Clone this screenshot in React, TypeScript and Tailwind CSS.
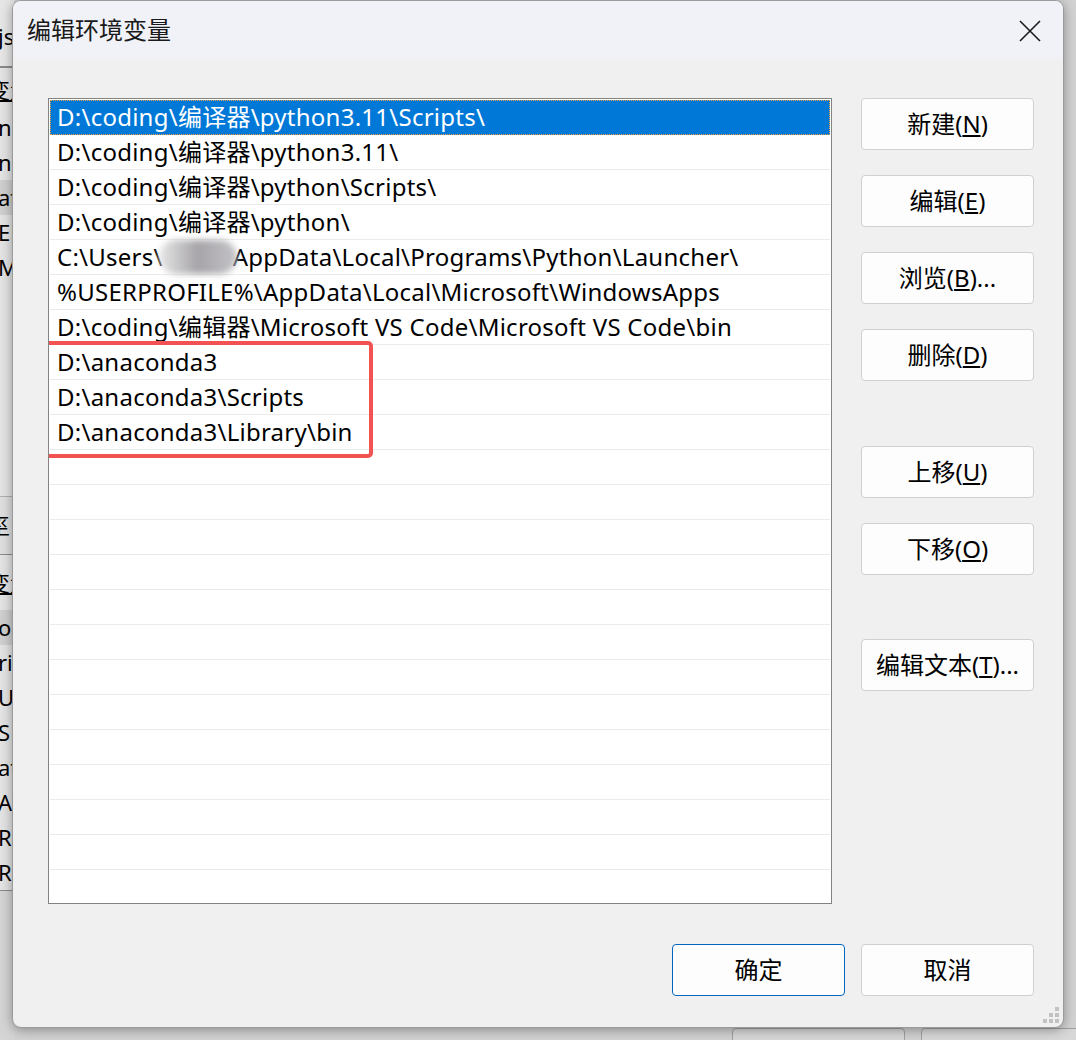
import React from "react";

const font = { fontFamily: '"Noto Sans", "Noto Sans CJK SC", sans-serif' };

const paths = [
  "D:\\coding\\编译器\\python3.11\\Scripts\\",
  "D:\\coding\\编译器\\python3.11\\",
  "D:\\coding\\编译器\\python\\Scripts\\",
  "D:\\coding\\编译器\\python\\",
  "USER",
  "%USERPROFILE%\\AppData\\Local\\Microsoft\\WindowsApps",
  "D:\\coding\\编辑器\\Microsoft VS Code\\Microsoft VS Code\\bin",
  "D:\\anaconda3",
  "D:\\anaconda3\\Scripts",
  "D:\\anaconda3\\Library\\bin",
];

const rows = [...paths, ...Array(13).fill("")];

const leftTop = [
  { t: "n", hl: false },
  { t: "n", hl: false },
  { t: "at", hl: true },
  { t: "EN", hl: false },
  { t: "M", hl: false },
];
const leftBottom = [
  { t: "o", hl: true },
  { t: "ri", hl: false },
  { t: "U", hl: false },
  { t: "S", hl: false },
  { t: "at", hl: false },
  { t: "A", hl: false },
  { t: "R", hl: false },
  { t: "R", hl: false },
];

function Btn({ children, primary }: { children: React.ReactNode; primary?: boolean }) {
  return (
    <button
      className={`w-[173px] h-[52px] rounded-[4px] bg-[#fdfdfd] text-[24px] text-black flex items-center justify-center border ${
        primary ? "border-[#0067c0]" : "border-[#d0d0d0]"
      }`}
    >
      {children}
    </button>
  );
}

function PathRow({ text, i }: { text: string; i: number }) {
  const selected = i === 0;
  return (
    <div
      className={`h-[35px] shrink-0 flex items-center pl-[7px] whitespace-nowrap border-b ${
        selected
          ? "bg-[#0078d7] text-white border-[#0078d7] outline-1 outline-dotted outline-[#f0a040] -outline-offset-1"
          : "border-[#ebebeb] text-black"
      }`}
    >
      {text === "USER" ? (
        <span className="flex items-center">
          C:\Users\
          <span className="inline-block w-[78px] h-[34px] -mx-[4px] rounded-full bg-gradient-to-r from-[#e8e8e8] via-[#a6a4a8] to-[#c4c3c7] blur-[3px]" />
          AppData\Local\Programs\Python\Launcher\
        </span>
      ) : (
        text
      )}
    </div>
  );
}

export default function App() {
  return (
    <div className="relative w-[1076px] h-[1040px] overflow-hidden bg-[#c4c4c4] text-[22px]" style={font}>
      {/* window behind the dialog */}
      <div className="absolute inset-0 flex bg-[#d2d2d2]">
        <div className="w-[14px] flex flex-col">
          <div className="h-[68px] shrink-0 bg-[#e6e6e6] border-b-2 border-[#8a8a8a] flex items-center pt-[6px]">
            <span className="-ml-[2px] text-black">js</span>
          </div>
          <div className="h-[42px] shrink-0 flex items-center bg-[#e3e3e3]">
            <span className="-ml-[12px] text-black whitespace-nowrap underline">变量</span>
          </div>
          <div className="flex flex-col bg-[#e3e3e3]">
            {leftTop.map((r, i) => (
              <div key={i} className={`h-[35px] flex items-center ${r.hl ? "bg-[#cfcfcf]" : ""}`}>
                <span className="-ml-[2px] text-black whitespace-nowrap">{r.t}</span>
              </div>
            ))}
          </div>
          <div className="h-[212px] shrink-0 bg-[#e3e3e3] border-b border-[#b0b0b0]" />
          <div className="h-[58px] shrink-0 bg-[#dedede] border-b border-[#8a8a8a] flex items-center">
            <span className="-ml-[12px] text-black">巠</span>
          </div>
          <div className="h-[55px] shrink-0 flex items-center bg-[#e3e3e3]">
            <span className="-ml-[12px] text-black whitespace-nowrap underline">变量</span>
          </div>
          <div className="flex flex-col bg-[#e3e3e3] border-b border-[#8a8a8a]">
            {leftBottom.map((r, i) => (
              <div key={i} className={`h-[35px] flex items-center ${r.hl ? "bg-[#cfcfcf]" : ""}`}>
                <span className="-ml-[2px] text-black whitespace-nowrap">{r.t}</span>
              </div>
            ))}
          </div>
          <div className="flex-1 bg-[#d4d4d4]" />
        </div>

        <div className="flex-1 flex flex-col justify-end">
          <div className="h-[12px] flex gap-[16px] pl-[718px]">
            <div className="w-[173px] h-[20px] border border-[#a0a0a0] rounded-[4px] bg-[#d8d8d8]" />
            <div className="w-[173px] h-[20px] border border-[#a0a0a0] rounded-[4px] bg-[#d8d8d8]" />
          </div>
        </div>

        <div className="w-[14px] flex flex-col bg-[#dadada]">
          <div className="h-[68px] shrink-0 bg-[#e0e0e0] border-b-2 border-[#7a7a7a]" />
          <div className="h-[292px] shrink-0 bg-[#e2e2e2] flex">
            <div className="w-[5px]" />
            <div className="w-[1px] h-[40px] mt-[2px] bg-[#b8b8b8]" />
          </div>
          <div className="h-[30px] shrink-0 border-t-2 border-[#7a7a7a] bg-[#cdcdcd]" />
          <div className="h-[65px] shrink-0 border-t border-[#a8a8a8] bg-[#d2d2d2]" />
          <div className="h-[45px] shrink-0 border-t border-[#a8a8a8] bg-[#cdcdcd]" />
          <div className="h-[68px] shrink-0 border-b-2 border-[#7a7a7a] bg-[#d0d0d0]" />
          <div className="h-[322px] shrink-0 bg-[#d6d6d6] flex">
            <div className="w-[5px]" />
            <div className="w-[4px] h-[300px] mt-[4px] bg-[#cacaca]" />
          </div>
          <div className="h-[25px] shrink-0 border-t-2 border-[#7a7a7a] bg-[#cdcdcd]" />
          <div className="h-[55px] shrink-0 border-t border-[#a8a8a8] bg-[#d0d0d0]" />
          <div className="h-[30px] shrink-0 border-t border-[#a8a8a8] bg-[#cdcdcd]" />
          <div className="flex-1 border-t border-[#a8a8a8] bg-[#cacaca]" />
        </div>
      </div>

      {/* dialog */}
      <div className="absolute left-[12px] top-0 w-[1052px] h-[1028px] rounded-[9px] border border-[#9a9a9a] bg-[#f0f0f0] shadow-[0_2px_12px_rgba(0,0,0,0.35)] overflow-hidden flex flex-col">
        <div className="h-[58px] shrink-0 bg-[#f0f2f8] flex items-center justify-between pl-[14px] pr-[22px]">
          <span className="text-[24px] text-[#1a1a1a]">编辑环境变量</span>
          <svg width="22" height="22" viewBox="0 0 22 22" className="mt-[1px]">
            <path d="M1 1 L21 21 M21 1 L1 21" stroke="#1a1a1a" strokeWidth="1.6" />
          </svg>
        </div>

        <div className="flex-1 flex flex-col pl-[35px] pr-[29px] pt-[39px] pb-[31px]">
          <div className="flex gap-[29px]">
            <div className="relative w-[785px] h-[806px] bg-white border border-[#838383] p-[1px] flex flex-col overflow-hidden text-[24px] tracking-[0.25px]">
              {rows.map((r, i) => (
                <PathRow key={i} text={r} i={i} />
              ))}
              <div className="absolute left-[-13px] top-[242px] w-[337px] h-[117px] rounded-[5px] border-4 border-[#f25252] pointer-events-none" />
            </div>

            <div className="flex flex-col">
              <Btn>
                新建(<u>N</u>)
              </Btn>
              <div className="h-[25px]" />
              <Btn>
                编辑(<u>E</u>)
              </Btn>
              <div className="h-[25px]" />
              <Btn>
                浏览(<u>B</u>)...
              </Btn>
              <div className="h-[25px]" />
              <Btn>
                删除(<u>D</u>)
              </Btn>
              <div className="h-[65px]" />
              <Btn>
                上移(<u>U</u>)
              </Btn>
              <div className="h-[25px]" />
              <Btn>
                下移(<u>O</u>)
              </Btn>
              <div className="h-[64px]" />
              <Btn>
                编辑文本(<u>T</u>)...
              </Btn>
            </div>
          </div>

          <div className="flex-1" />
          <div className="flex justify-end gap-[16px]">
            <Btn primary>确定</Btn>
            <Btn>取消</Btn>
          </div>
        </div>

        {/* resize grip */}
        <div className="absolute right-[4px] bottom-[4px] grid grid-cols-3 gap-[2px]">
          <span className="w-[4px] h-[4px]" />
          <span className="w-[4px] h-[4px]" />
          <span className="w-[4px] h-[4px] bg-[#c2c2c2]" />
          <span className="w-[4px] h-[4px]" />
          <span className="w-[4px] h-[4px] bg-[#c2c2c2]" />
          <span className="w-[4px] h-[4px] bg-[#c2c2c2]" />
          <span className="w-[4px] h-[4px] bg-[#c2c2c2]" />
          <span className="w-[4px] h-[4px] bg-[#c2c2c2]" />
          <span className="w-[4px] h-[4px] bg-[#c2c2c2]" />
        </div>
      </div>
    </div>
  );
}
